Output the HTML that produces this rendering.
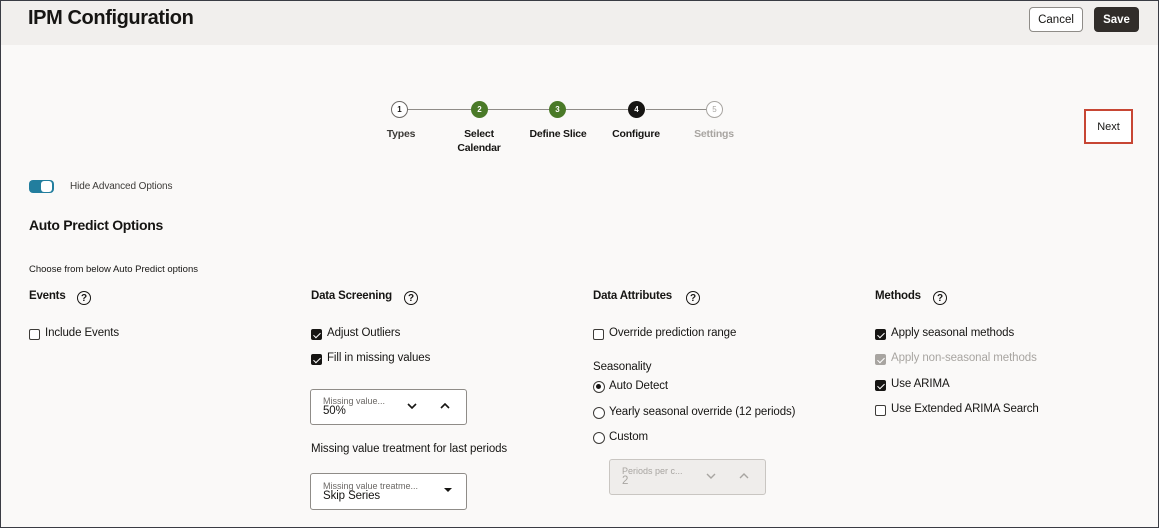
<!DOCTYPE html>
<html><head><style>
*{box-sizing:border-box;margin:0;padding:0}
body{width:1159px;height:528px;overflow:hidden;font-family:"Liberation Sans",sans-serif;background:#faf9f8;color:#161513;position:relative}
.frame{position:absolute;left:0;top:0;width:1159px;height:528px;border:1px solid #3a3c44;pointer-events:none}
.hdr{position:absolute;left:0;top:0;width:1159px;height:45px;background:#f1efed}
.abs{position:absolute;white-space:nowrap}
h1{position:absolute;left:28px;top:7px;font-size:20px;font-weight:bold;letter-spacing:-0.4px}
.btn{position:absolute;font-size:11.5px;display:flex;align-items:center;justify-content:center;border-radius:4px}
.step{position:absolute;width:17px;height:17px;border-radius:50%;font-size:8px;font-weight:bold;display:flex;align-items:center;justify-content:center}
.line{position:absolute;height:1px;background:#8f8c88;top:109px}
.lbl{position:absolute;font-size:10.5px;font-weight:bold;text-align:center;width:90px;line-height:14px;letter-spacing:-0.2px}
.sec{font-size:11.5px;font-weight:bold;letter-spacing:-0.2px}
.help{position:absolute;width:14px;height:14px;border:1.5px solid #161513;border-radius:50%;font-size:10px;font-weight:bold;display:flex;align-items:center;justify-content:center}
.t{font-size:11.5px;color:#161513;letter-spacing:-0.1px}
.cb{position:absolute;width:11px;height:11px;border:1.3px solid #3d3b38;border-radius:2px;background:#fff}
.cb.on{background:#161513;border-color:#161513}
.cb.on::after{content:"";position:absolute;left:3px;top:0.5px;width:3px;height:6px;border:solid #fff;border-width:0 1.5px 1.5px 0;transform:rotate(45deg)}
.cb.dis{background:#a8a5a1;border-color:#a8a5a1}
.rb{position:absolute;width:12px;height:12px;border:1.3px solid #3d3b38;border-radius:50%;background:#fff}
.rb.on::after{content:"";position:absolute;left:2px;top:2px;width:5px;height:5px;border-radius:50%;background:#161513}
.box{position:absolute;border:1px solid #8f8c88;border-radius:3px;background:#fff}
.small{font-size:9px;color:#6b6865}
svg.ch{position:absolute}
</style></head><body>
<div class="hdr"></div>
<h1>IPM Configuration</h1>
<div class="btn" style="left:1029px;top:7px;width:54px;height:25px;border:1px solid #8f8c88;background:#fff">Cancel</div>
<div class="btn" style="left:1094px;top:7px;width:45px;height:25px;background:#312d2a;color:#fff;font-weight:bold">Save</div>

<div class="line" style="left:408px;width:63px"></div>
<div class="line" style="left:488px;width:61px"></div>
<div class="line" style="left:566px;width:62px"></div>
<div class="line" style="left:646px;width:61px"></div>
<div class="step" style="left:391px;top:101px;border:1px solid #6b6865;background:#fff;color:#161513">1</div>
<div class="step" style="left:471px;top:101px;background:#4a7a28;color:#fff">2</div>
<div class="step" style="left:549px;top:101px;background:#4a7a28;color:#fff">3</div>
<div class="step" style="left:628px;top:101px;background:#161513;color:#fff">4</div>
<div class="step" style="left:706px;top:101px;border:1px solid #a8a5a1;background:#fff;color:#a8a5a1;font-weight:normal">5</div>
<div class="lbl" style="left:356px;top:127px;color:#3d3b38">Types</div>
<div class="lbl" style="left:434px;top:127px">Select<br>Calendar</div>
<div class="lbl" style="left:513px;top:127px">Define Slice</div>
<div class="lbl" style="left:591px;top:127px">Configure</div>
<div class="lbl" style="left:669px;top:127px;color:#a8a5a1">Settings</div>

<div class="btn" style="left:1084px;top:109px;width:49px;height:35px;border:2px solid #c74634;border-radius:0;font-size:11px;background:#fff">Next</div>

<div class="abs" style="left:29px;top:180px;width:25px;height:13px;border-radius:4px;background:#227e9e"></div>
<div class="abs" style="left:41px;top:181px;width:11px;height:11px;border-radius:3px;background:#fff"></div>
<div class="abs t" style="left:70px;top:181px;font-size:10px;color:#3d3b38">Hide Advanced Options</div>

<div class="abs" style="left:29px;top:217px;font-size:14px;font-weight:bold;letter-spacing:-0.3px">Auto Predict Options</div>
<div class="abs" style="left:29px;top:264px;font-size:9.5px">Choose from below Auto Predict options</div>

<div class="abs sec" style="left:29px;top:290px">Events</div><div class="help" style="left:77px;top:291px">?</div>
<div class="abs sec" style="left:311px;top:290px">Data Screening</div><div class="help" style="left:404px;top:291px">?</div>
<div class="abs sec" style="left:593px;top:290px">Data Attributes</div><div class="help" style="left:686px;top:291px">?</div>
<div class="abs sec" style="left:875px;top:290px">Methods</div><div class="help" style="left:933px;top:291px">?</div>

<div class="cb" style="left:29px;top:329px"></div><div class="abs t" style="left:45px;top:327px">Include Events</div>

<div class="cb on" style="left:311px;top:329px"></div><div class="abs t" style="left:327px;top:327px">Adjust Outliers</div>
<div class="cb on" style="left:311px;top:354px"></div><div class="abs t" style="left:327px;top:352px">Fill in missing values</div>
<div class="box" style="left:310px;top:389px;width:157px;height:36px"></div>
<div class="abs small" style="left:323px;top:396px">Missing value...</div>
<div class="abs t" style="left:323px;top:405px">50%</div>
<svg class="ch" style="left:407px;top:403px" width="10" height="6"><path d="M1 1l4 4 4-4" fill="none" stroke="#161513" stroke-width="1.6"/></svg>
<svg class="ch" style="left:440px;top:403px" width="10" height="6"><path d="M1 5l4-4 4 4" fill="none" stroke="#161513" stroke-width="1.6"/></svg>
<div class="abs t" style="left:311px;top:443px">Missing value treatment for last periods</div>
<div class="box" style="left:310px;top:473px;width:157px;height:37px"></div>
<div class="abs small" style="left:323px;top:481px">Missing value treatme...</div>
<div class="abs t" style="left:323px;top:490px">Skip Series</div>
<div class="abs" style="left:444px;top:488px;width:0;height:0;border-left:4px solid transparent;border-right:4px solid transparent;border-top:4px solid #161513"></div>

<div class="cb" style="left:593px;top:329px"></div><div class="abs t" style="left:609px;top:327px">Override prediction range</div>
<div class="abs t" style="left:593px;top:361px">Seasonality</div>
<div class="rb on" style="left:593px;top:381px"></div><div class="abs t" style="left:609px;top:380px">Auto Detect</div>
<div class="rb" style="left:593px;top:407px"></div><div class="abs t" style="left:609px;top:406px">Yearly seasonal override (12 periods)</div>
<div class="rb" style="left:593px;top:432px"></div><div class="abs t" style="left:609px;top:431px">Custom</div>
<div class="box" style="left:609px;top:459px;width:157px;height:36px;background:#efedeb;border-color:#c9c6c2"></div>
<div class="abs small" style="left:622px;top:466px;color:#a8a5a1">Periods per c...</div>
<div class="abs t" style="left:622px;top:475px;color:#a8a5a1">2</div>
<svg class="ch" style="left:706px;top:473px" width="10" height="6"><path d="M1 1l4 4 4-4" fill="none" stroke="#a8a5a1" stroke-width="1.4"/></svg>
<svg class="ch" style="left:739px;top:473px" width="10" height="6"><path d="M1 5l4-4 4 4" fill="none" stroke="#a8a5a1" stroke-width="1.4"/></svg>

<div class="cb on" style="left:875px;top:329px"></div><div class="abs t" style="left:891px;top:327px">Apply seasonal methods</div>
<div class="cb on dis" style="left:875px;top:354px"></div><div class="abs t" style="left:891px;top:352px;color:#a8a5a1">Apply non-seasonal methods</div>
<div class="cb on" style="left:875px;top:380px"></div><div class="abs t" style="left:891px;top:378px">Use ARIMA</div>
<div class="cb" style="left:875px;top:405px"></div><div class="abs t" style="left:891px;top:403px">Use Extended ARIMA Search</div>
<div class="frame"></div>
</body></html>
